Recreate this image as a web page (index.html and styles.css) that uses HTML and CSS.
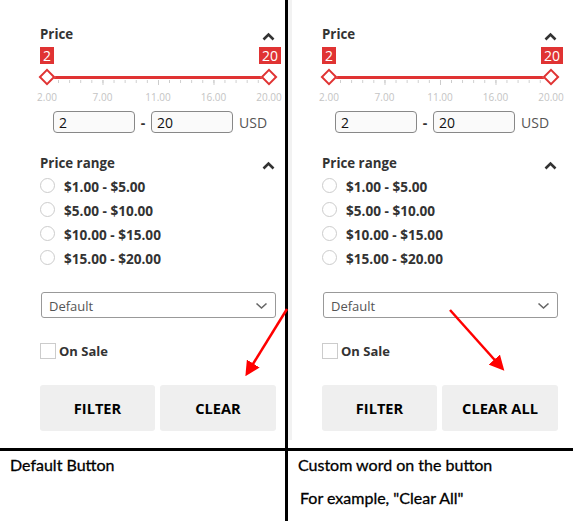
FILE: index.html
```html
<!DOCTYPE html>
<html lang="en">
<head>
    <meta charset="UTF-8">
    <title>Filter button label</title>
    <link rel="stylesheet" href="styles.css">
</head>
<body>
    <div class="sheet">
        <div class="top">
            <div class="panel panel-left">
                <div class="filter-head">
                    <span>Price</span>
                    <svg class="chevron" width="13" height="9" viewBox="0 0 13 9"><path d="M1.5 7.5 L6.5 2.5 L11.5 7.5" fill="none" stroke="#333" stroke-width="2.6"/></svg>
                </div>
                <div class="badges"><span class="badge">2</span><span class="badge">20</span></div>
                <div class="track"><span class="handle"></span><span class="bar"></span><span class="handle"></span></div>
                <div class="ticks"></div>
                <div class="scale"><span>2.00</span><span>7.00</span><span>11.00</span><span>16.00</span><span>20.00</span></div>
                <div class="range-inputs">
                    <input type="text" value="2">
                    <span class="dash">-</span>
                    <input type="text" value="20">
                    <span class="unit">USD</span>
                </div>
                <div class="filter-head second">
                    <span>Price range</span>
                    <svg class="chevron" width="13" height="9" viewBox="0 0 13 9"><path d="M1.5 7.5 L6.5 2.5 L11.5 7.5" fill="none" stroke="#333" stroke-width="2.6"/></svg>
                </div>
                <ul class="ranges">
                    <li><input type="radio" name="r1"><span>$1.00 - $5.00</span></li>
                    <li><input type="radio" name="r1"><span>$5.00 - $10.00</span></li>
                    <li><input type="radio" name="r1"><span>$10.00 - $15.00</span></li>
                    <li><input type="radio" name="r1"><span>$15.00 - $20.00</span></li>
                </ul>
                <div class="select">
                    <span>Default</span>
                    <svg width="13" height="8" viewBox="0 0 13 8"><path d="M1.5 1.5 L6.5 6 L11.5 1.5" fill="none" stroke="#666" stroke-width="1.6"/></svg>
                </div>
                <label class="sale"><input type="checkbox"><span>On Sale</span></label>
                <div class="actions">
                    <button>FILTER</button>
                    <button>CLEAR</button>
                </div>
            </div>
            <div class="divider"></div>
            <div class="panel panel-right">
                <div class="filter-head">
                    <span>Price</span>
                    <svg class="chevron" width="13" height="9" viewBox="0 0 13 9"><path d="M1.5 7.5 L6.5 2.5 L11.5 7.5" fill="none" stroke="#333" stroke-width="2.6"/></svg>
                </div>
                <div class="badges"><span class="badge">2</span><span class="badge">20</span></div>
                <div class="track"><span class="handle"></span><span class="bar"></span><span class="handle"></span></div>
                <div class="ticks"></div>
                <div class="scale"><span>2.00</span><span>7.00</span><span>11.00</span><span>16.00</span><span>20.00</span></div>
                <div class="range-inputs">
                    <input type="text" value="2">
                    <span class="dash">-</span>
                    <input type="text" value="20">
                    <span class="unit">USD</span>
                </div>
                <div class="filter-head second">
                    <span>Price range</span>
                    <svg class="chevron" width="13" height="9" viewBox="0 0 13 9"><path d="M1.5 7.5 L6.5 2.5 L11.5 7.5" fill="none" stroke="#333" stroke-width="2.6"/></svg>
                </div>
                <ul class="ranges">
                    <li><input type="radio" name="r2"><span>$1.00 - $5.00</span></li>
                    <li><input type="radio" name="r2"><span>$5.00 - $10.00</span></li>
                    <li><input type="radio" name="r2"><span>$10.00 - $15.00</span></li>
                    <li><input type="radio" name="r2"><span>$15.00 - $20.00</span></li>
                </ul>
                <div class="select">
                    <span>Default</span>
                    <svg width="13" height="8" viewBox="0 0 13 8"><path d="M1.5 1.5 L6.5 6 L11.5 1.5" fill="none" stroke="#666" stroke-width="1.6"/></svg>
                </div>
                <label class="sale"><input type="checkbox"><span>On Sale</span></label>
                <div class="actions">
                    <button>FILTER</button>
                    <button>CLEAR ALL</button>
                </div>
            </div>
        </div>
        <div class="rule"></div>
        <div class="bottom">
            <div class="note">
                <p>Default Button</p>
            </div>
            <div class="divider"></div>
            <div class="note">
                <p>Custom word on the button</p>
                <p class="indent">For example, "Clear All"</p>
            </div>
        </div>

        <!-- red arrows drawn over the screenshots -->
        <svg class="arrows" width="573" height="521" viewBox="0 0 573 521">
            <defs>
                <marker id="head" markerWidth="6" markerHeight="6" refX="4" refY="3" orient="auto">
                    <path d="M0 0 L6 3 L0 6 Z" fill="#f00"/>
                </marker>
            </defs>
            <line x1="287" y1="309" x2="248" y2="372" stroke="#f00" stroke-width="2.5" marker-end="url(#head)"/>
            <line x1="450" y1="310" x2="501" y2="367" stroke="#f00" stroke-width="2.5" marker-end="url(#head)"/>
        </svg>
    </div>
</body>
</html>
```

FILE: styles.css
```css
body {
    margin: 0;
    background: #fff;
    font-family: "Open Sans", Arial, sans-serif;
    color: #333;
}

.sheet {
    position: relative;
    width: 573px;
    height: 521px;
    overflow: hidden;
}

.top, .bottom {
    display: grid;
    grid-template-columns: 285px 3px 1fr;
}

.top {
    height: 448px;
}

.bottom {
    height: 70px;
}

.divider {
    background: #000;
}

.rule {
    height: 3px;
    background: #000;
}

.panel {
    padding-top: 25px;
    box-sizing: border-box;
}

.panel-left {
    padding-left: 40px;
}

.panel-right {
    padding-left: 30px;
    border-left: 4px solid #f2f2f2;
    margin-bottom: 8px;
}

.panel > * {
    width: 236px;
}

.filter-head {
    display: flex;
    justify-content: space-between;
    align-items: center;
    height: 18px;
    font-size: 13px;
    font-weight: 700;
    color: #333;
}

.filter-head span {
    font-size: 13.3px;
}

.filter-head .chevron {
    margin-top: 4px;
    margin-right: 1px;
}

.filter-head.second {
    margin-top: 21px;
}

.badges {
    display: flex;
    justify-content: space-between;
    margin-top: 4px;
    width: 241px;
}

.badge {
    height: 17px;
    line-height: 17px;
    padding: 0 3px;
    background: #e03333;
    color: #fff;
    font-size: 14px;
}

.track {
    display: flex;
    align-items: center;
    height: 14px;
    margin-top: 6px;
}

.handle {
    width: 8px;
    height: 8px;
    margin: 0 1px;
    border: 2px solid #e03333;
    background: #fff;
    transform: rotate(45deg);
    flex-shrink: 0;
}

.bar {
    flex: 1;
    height: 3px;
    background: #e03333;
}

.ticks {
    width: 222px;
    height: 5px;
    margin: -4px 7px 0;
    border-right: 1px solid #ccc;
    background-image:
        linear-gradient(to right, #ccc 1px, transparent 1px),
        linear-gradient(to right, #ccc 1px, transparent 1px);
    background-size: calc(100% / 4) 5px, calc(100% / 20) 3px;
    background-repeat: repeat-x;
}

.scale {
    display: flex;
    justify-content: space-between;
    width: 252px;
    margin: 5px 0 0 -8px;
    height: 14px;
    line-height: 14px;
    font-size: 10px;
    color: #c4c4c4;
}

.scale span {
    width: 30px;
    text-align: center;
}

.range-inputs {
    display: flex;
    align-items: center;
    margin-top: 7px;
    height: 22px;
    padding-left: 13px;
    box-sizing: border-box;
}

.range-inputs input {
    width: 82px;
    height: 22px;
    box-sizing: border-box;
    padding: 0 5px;
    border: 1px solid #888;
    border-radius: 4px;
    background: #fafafa;
    font-family: "Open Sans", Arial, sans-serif;
    font-size: 14px;
    color: #111;
}

.range-inputs .dash {
    width: 16px;
    text-align: center;
    font-size: 14px;
    font-weight: 700;
    color: #333;
}

.range-inputs .unit {
    margin-left: 6px;
    font-size: 14px;
    color: #555;
}

.ranges {
    list-style: none;
    margin: 1px 0 0;
    padding: 0;
}

.ranges li {
    display: flex;
    align-items: center;
    height: 24px;
    font-size: 13.6px;
    font-weight: 700;
    color: #333;
}

.ranges li span {
    padding-top: 3px;
}

.ranges input {
    appearance: none;
    width: 15px;
    height: 15px;
    margin: 0 9px 0 0;
    border: 1px solid #ccc;
    border-radius: 50%;
    background: #fff;
}

.select {
    display: flex;
    justify-content: space-between;
    align-items: center;
    height: 26px;
    margin-top: 23px;
    margin-left: 1px;
    width: 235px;
    padding: 1px 7px 0 7px;
    box-sizing: border-box;
    border: 1px solid #999;
    border-radius: 3px;
    font-size: 13px;
    color: #555;
}

.sale {
    display: flex;
    align-items: center;
    height: 16px;
    margin-top: 25px;
    font-size: 13px;
    font-weight: 700;
    color: #333;
}

.sale input {
    appearance: none;
    width: 16px;
    height: 16px;
    margin: 0 3px 0 0;
    border: 1px solid #ccc;
    background: #fff;
}

.actions {
    display: grid;
    grid-template-columns: 115px 116px;
    gap: 5px;
    margin-top: 26px;
}

.actions button {
    height: 46px;
    border: none;
    border-radius: 3px;
    background: #efefef;
    font-family: "Open Sans", Arial, sans-serif;
    font-size: 14.6px;
    font-weight: 700;
    color: #000;
}

.note {
    padding: 2px 0 0 10px;
}

.note p {
    margin: 0;
    font-family: Lato, "Open Sans", sans-serif;
    font-size: 16px;
    line-height: 24px;
    color: #000;
    -webkit-text-stroke: 0.3px #000;
}

.note .indent {
    margin-top: 9px;
    padding-left: 2px;
}

.arrows {
    position: absolute;
    left: 0;
    top: 0;
    pointer-events: none;
}
```
